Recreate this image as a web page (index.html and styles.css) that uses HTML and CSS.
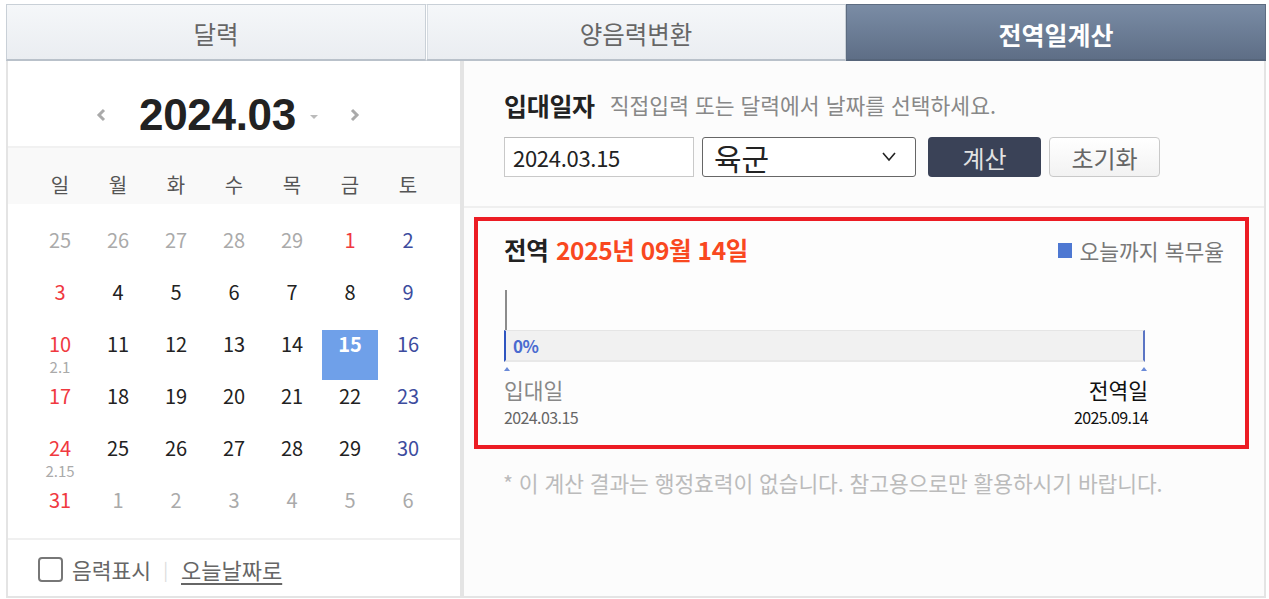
FILE: index.html
```html
<!DOCTYPE html>
<html lang="ko">
<head>
  <meta charset="UTF-8">
  <meta name="viewport" content="width=device-width, initial-scale=1.0">
  <title>전역일계산</title>
  <link rel="stylesheet" href="styles.css">
</head>
<body>
  <div class="wrap">
    <ul class="tabs">
      <li>달력</li>
      <li>양음력변환</li>
      <li class="on">전역일계산</li>
    </ul>
    <div class="body">
      <!-- 달력 -->
      <section class="cal">
        <div class="cal-head">
          <button class="arrow prev"><svg width="10" height="14" viewBox="0 0 10 14"><polyline points="8,2 3,7 8,12" fill="none" stroke="#aaa" stroke-width="3"/></svg></button>
          <strong class="ym">2024.03</strong>
          <span class="caret"></span>
          <button class="arrow next"><svg width="10" height="14" viewBox="0 0 10 14"><polyline points="2,2 7,7 2,12" fill="none" stroke="#aaa" stroke-width="3"/></svg></button>
        </div>
        <div class="week">
          <span>일</span><span>월</span><span>화</span><span>수</span><span>목</span><span>금</span><span>토</span>
        </div>
        <div class="days">
          <div class="day off">25</div><div class="day off">26</div><div class="day off">27</div><div class="day off">28</div><div class="day off">29</div><div class="day sun">1</div><div class="day sat">2</div>
          <div class="day sun">3</div><div class="day">4</div><div class="day">5</div><div class="day">6</div><div class="day">7</div><div class="day">8</div><div class="day sat">9</div>
          <div class="day sun">10<em>2.1</em></div><div class="day">11</div><div class="day">12</div><div class="day">13</div><div class="day">14</div><div class="day sel">15</div><div class="day sat">16</div>
          <div class="day sun">17</div><div class="day">18</div><div class="day">19</div><div class="day">20</div><div class="day">21</div><div class="day">22</div><div class="day sat">23</div>
          <div class="day sun">24<em>2.15</em></div><div class="day">25</div><div class="day">26</div><div class="day">27</div><div class="day">28</div><div class="day">29</div><div class="day sat">30</div>
          <div class="day sun">31</div><div class="day off">1</div><div class="day off">2</div><div class="day off">3</div><div class="day off">4</div><div class="day off">5</div><div class="day off">6</div>
        </div>
        <div class="cal-foot">
          <label class="chk"><span class="box"></span>음력표시</label>
          <span class="bar-sep">|</span>
          <a href="#" class="today">오늘날짜로</a>
        </div>
      </section>
      <!-- 전역일계산 -->
      <section class="calc">
        <div class="form">
          <p class="form-title"><strong>입대일자</strong><span>직접입력 또는 달력에서 날짜를 선택하세요.</span></p>
          <div class="form-row">
            <input type="text" class="date-input" value="2024.03.15">
            <div class="select">육군<svg width="14" height="10" viewBox="0 0 14 10"><polyline points="1,1 7,8 13,1" fill="none" stroke="#222" stroke-width="1.6"/></svg></div>
            <button class="btn-dark">계산</button>
            <button class="btn-light">초기화</button>
          </div>
        </div>
        <div class="result">
          <div class="result-head">
            <h3>전역 <span>2025년 09월 14일</span></h3>
            <p class="legend"><i></i>오늘까지 복무율</p>
          </div>
          <div class="track">
            <div class="now"></div>
            <div class="bar"><b>0%</b></div>
            <div class="ends"><i></i><i></i></div>
            <div class="labels">
              <div class="start"><p>입대일</p><small>2024.03.15</small></div>
              <div class="end"><p>전역일</p><small>2025.09.14</small></div>
            </div>
          </div>
        </div>
        <p class="note">* 이 계산 결과는 행정효력이 없습니다. 참고용으로만 활용하시기 바랍니다.</p>
      </section>
    </div>
  </div>
</body>
</html>
```

FILE: styles.css
```css
* { box-sizing: border-box; }
html, body { margin:0; padding:0; }
body { font-family: "Noto Sans CJK KR", "Noto Sans", sans-serif; background:#fff; color:#222; }
ul, p, h3 { margin:0; padding:0; }
button { font-family:inherit; cursor:pointer; }

.wrap { width:1260px; margin:4px 0 0 6px; }

/* Tabs */
.tabs { list-style:none; display:grid; grid-template-columns:repeat(3,1fr); height:57px; }
.tabs li { display:flex; align-items:center; justify-content:center; padding-top:3px; font-size:24.5px; color:#666;
  background:linear-gradient(#f5f7f9,#eaedf1); border:1px solid #c9d0d7; border-bottom:2px solid #b9c1ca;
  border-left:1px solid #fff; box-shadow:inset 1px 0 0 #d5dbe1; }
.tabs li:first-child { border-left:1px solid #c9d0d7; box-shadow:none; }
.tabs li.on { background:linear-gradient(#7a8ca5,#5e6e86); color:#fff; font-weight:bold; font-size:25px;
  border-color:#5d6c81; border-bottom-color:#56657a; box-shadow:none; }

/* Body */
.body { display:flex; height:537px; border:2px solid #e4e4e4; border-top:0; }

/* Calendar */
.cal { width:456px; border-right:4px solid #e4e4e4; background:#fff; display:flex; flex-direction:column; }
.cal-head { height:87px; padding:22px 12px 0 0; display:flex; align-items:center; justify-content:center; border-bottom:2px solid #f1f1f1; }
.arrow { background:none; border:none; padding:0; width:10px; height:14px; display:flex; }
.ym { font-family:"Liberation Sans", Arial, sans-serif; font-size:44px; line-height:48px; color:#222; margin-left:33px; letter-spacing:-0.3px; }
.caret { width:0; height:0; border-left:4px solid transparent; border-right:4px solid transparent; border-top:4px solid #bbb; margin:4px 32px 0 14px; }
.week { height:56px; background:#f9f9f9; display:grid; grid-template-columns:repeat(7,58px); padding:25px 23px 0; }
.week span { text-align:center; font-size:20px; line-height:24px; color:#555; }
.days { display:grid; grid-template-columns:repeat(7,58px); grid-auto-rows:52px; padding:22px 23px 0; height:334px; }
.day { height:50px; margin:0 1px; padding-top:2px; text-align:center; font-size:20px; line-height:24px; color:#222; }
.day em { display:block; font-style:normal; font-size:15px; line-height:20px; margin-top:1px; color:#aaa; }
.day.off { color:#aaa; }
.day.sun { color:#f0393f; }
.day.sat { color:#3d4c9e; }
.day.sel { background:#6fa0e9; color:#fff; font-weight:bold; }
.cal-foot { flex:1; border-top:2px solid #f0f0f0; display:flex; align-items:center; padding:2px 0 0 30px; font-size:21.5px; color:#666; }
.chk { display:flex; align-items:center; }
.chk .box { width:25px; height:25px; border:2px solid #777; border-radius:4px; margin-right:9px; }
.bar-sep { color:#ddd; margin:0 13px 0 12px; font-size:18px; }
.today { color:#666; text-decoration:underline; text-underline-offset:4px; font-size:22px; }

/* Calculator */
.calc { flex:1; background:#fcfcfc; }
.form { padding:30px 0 29px 40px; border-bottom:2px solid #efefef; }
.form-title { display:flex; align-items:center; line-height:28px; }
.form-title strong { font-size:25px; color:#222; letter-spacing:-0.3px; }
.form-title span { font-size:21.5px; color:#888; margin-left:15px; }
.form-row { display:flex; margin-top:18px; height:40px; }
.date-input { width:190px; height:40px; border:1px solid #c9c9c9; border-top-color:#bbb; padding:0 8px; font-family:inherit; font-size:22px; color:#222; background:#fff; letter-spacing:-0.3px; }
.select { width:214px; margin-left:8px; border:1px solid #666; border-radius:3px; background:#fff; display:flex; align-items:center; justify-content:space-between; padding:0 19px 0 11px; font-size:30px; color:#222; }
.btn-dark { width:113px; margin-left:12px; border:none; border-radius:4px; background:#3a4257; color:#e2e2e2; font-size:24px; }
.btn-light { width:111px; margin-left:8px; border:1px solid #c9c9c9; border-radius:4px; background:linear-gradient(#fff,#f2f2f2); color:#666; font-size:24px; }

.result { margin:9px 15px 0 10px; height:232px; border:4px solid #ec1c24; background:#fdfdfd; padding:14px 21px 0 26px; }
.result-head { display:flex; justify-content:space-between; align-items:center; height:30px; }
.result-head h3 { font-size:24.5px; line-height:30px; color:#222; letter-spacing:-0.3px; }
.result-head h3 span { color:#f9481f; margin-left:1px; letter-spacing:-0.4px; }
.legend { display:flex; align-items:center; font-size:21.5px; color:#777; }
.legend i { width:14px; height:15px; background:#4e78d2; margin-right:8px; }
.track { margin-top:25px; width:644px; }
.now { width:2px; height:40px; background:#8c8c8c; margin-left:1px; }
.bar { width:641px; height:32px; background:#f1f1f1; border-top:1px solid #e5e5e5; border-bottom:2px solid #e8e8e8;
  border-left:2px solid #2f55c0; border-right:2px solid #5b75c4; padding-left:7px; display:flex; align-items:center; }
.bar b { font-size:17px; color:#4a6bd0; letter-spacing:-0.5px; }
.ends { width:643px; display:flex; justify-content:space-between; height:16px; padding-top:5px; }
.ends i { width:0; height:0; border-left:3px solid transparent; border-right:3px solid transparent; border-bottom:4px solid #6a8ad8; }
.labels { display:flex; justify-content:space-between; }
.labels p { font-size:21.5px; line-height:24px; color:#888; }
.labels small { display:block; font-size:16px; line-height:20px; margin-top:5px; color:#666; letter-spacing:-0.6px; }
.labels .end { text-align:right; }
.labels .end p, .labels .end small { color:#111; }

.note { margin:22px 0 0 39px; font-size:21.5px; line-height:24px; color:#bbb; letter-spacing:-0.1px; }
```
